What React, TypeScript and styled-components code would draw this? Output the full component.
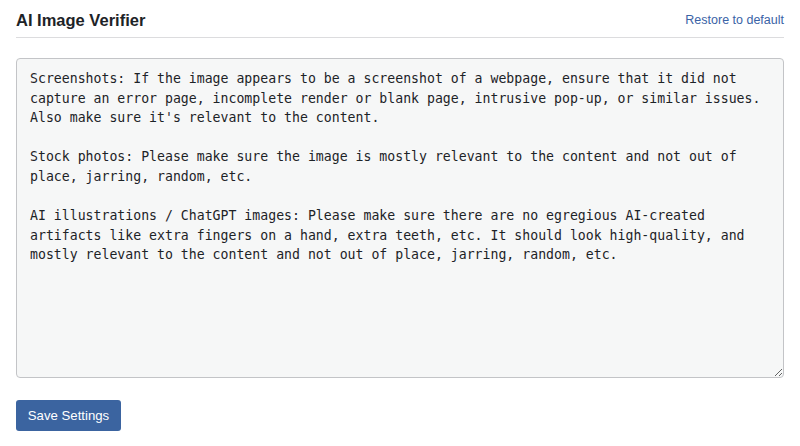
import React from "react";
import styled, { createGlobalStyle } from "styled-components";

const Global = createGlobalStyle`
  html, body { margin: 0; padding: 0; background: #ffffff; }
  body { font-family: "Liberation Sans", Arial, sans-serif; color: #1d2327; }
  * { box-sizing: border-box; }
`;

const Page = styled.div`
  padding: 0 16px;
  display: flex;
  flex-direction: column;
`;

const Header = styled.div`
  display: flex;
  align-items: center;
  justify-content: space-between;
  height: 38px;
  padding-top: 3px;
  border-bottom: 1px solid #dcdcde;
`;

const Title = styled.h2`
  margin: 0;
  font-size: 16.5px;
  font-weight: 700;
  color: #1d2327;
`;

const RestoreLink = styled.a`
  font-size: 12.5px;
  color: #3a63a6;
  text-decoration: none;
  cursor: pointer;
`;

const Editor = styled.textarea`
  margin-top: 20px;
  width: 100%;
  height: 320px;
  padding: 10px 13px;
  background: #f6f7f7;
  border: 1px solid #c3c4c7;
  border-radius: 4px;
  font-family: "DejaVu Sans Mono", "Liberation Mono", monospace;
  font-size: 13.2px;
  line-height: 19.6px;
  color: #1d2327;
  resize: both;
  outline: none;
`;

const SaveButton = styled.button`
  margin-top: 22px;
  align-self: flex-start;
  width: 105px;
  height: 31px;
  padding: 0;
  background: #3b64a0;
  color: #ffffff;
  border: none;
  border-radius: 3px;
  font-family: "Liberation Sans", Arial, sans-serif;
  font-size: 13.2px;
  font-weight: 500;
  cursor: pointer;
`;

const text = `Screenshots: If the image appears to be a screenshot of a webpage, ensure that it did not capture an error page, incomplete render or blank page, intrusive pop-up, or similar issues. Also make sure it's relevant to the content.

Stock photos: Please make sure the image is mostly relevant to the content and not out of place, jarring, random, etc.

AI illustrations / ChatGPT images: Please make sure there are no egregious AI-created artifacts like extra fingers on a hand, extra teeth, etc. It should look high-quality, and mostly relevant to the content and not out of place, jarring, random, etc.`;

export default function App() {
  return (
    <>
      <Global />
      <Page>
        <Header>
          <Title>AI Image Verifier</Title>
          <RestoreLink>Restore to default</RestoreLink>
        </Header>
        <Editor defaultValue={text} spellCheck={false} />
        <SaveButton>Save Settings</SaveButton>
      </Page>
    </>
  );
}
